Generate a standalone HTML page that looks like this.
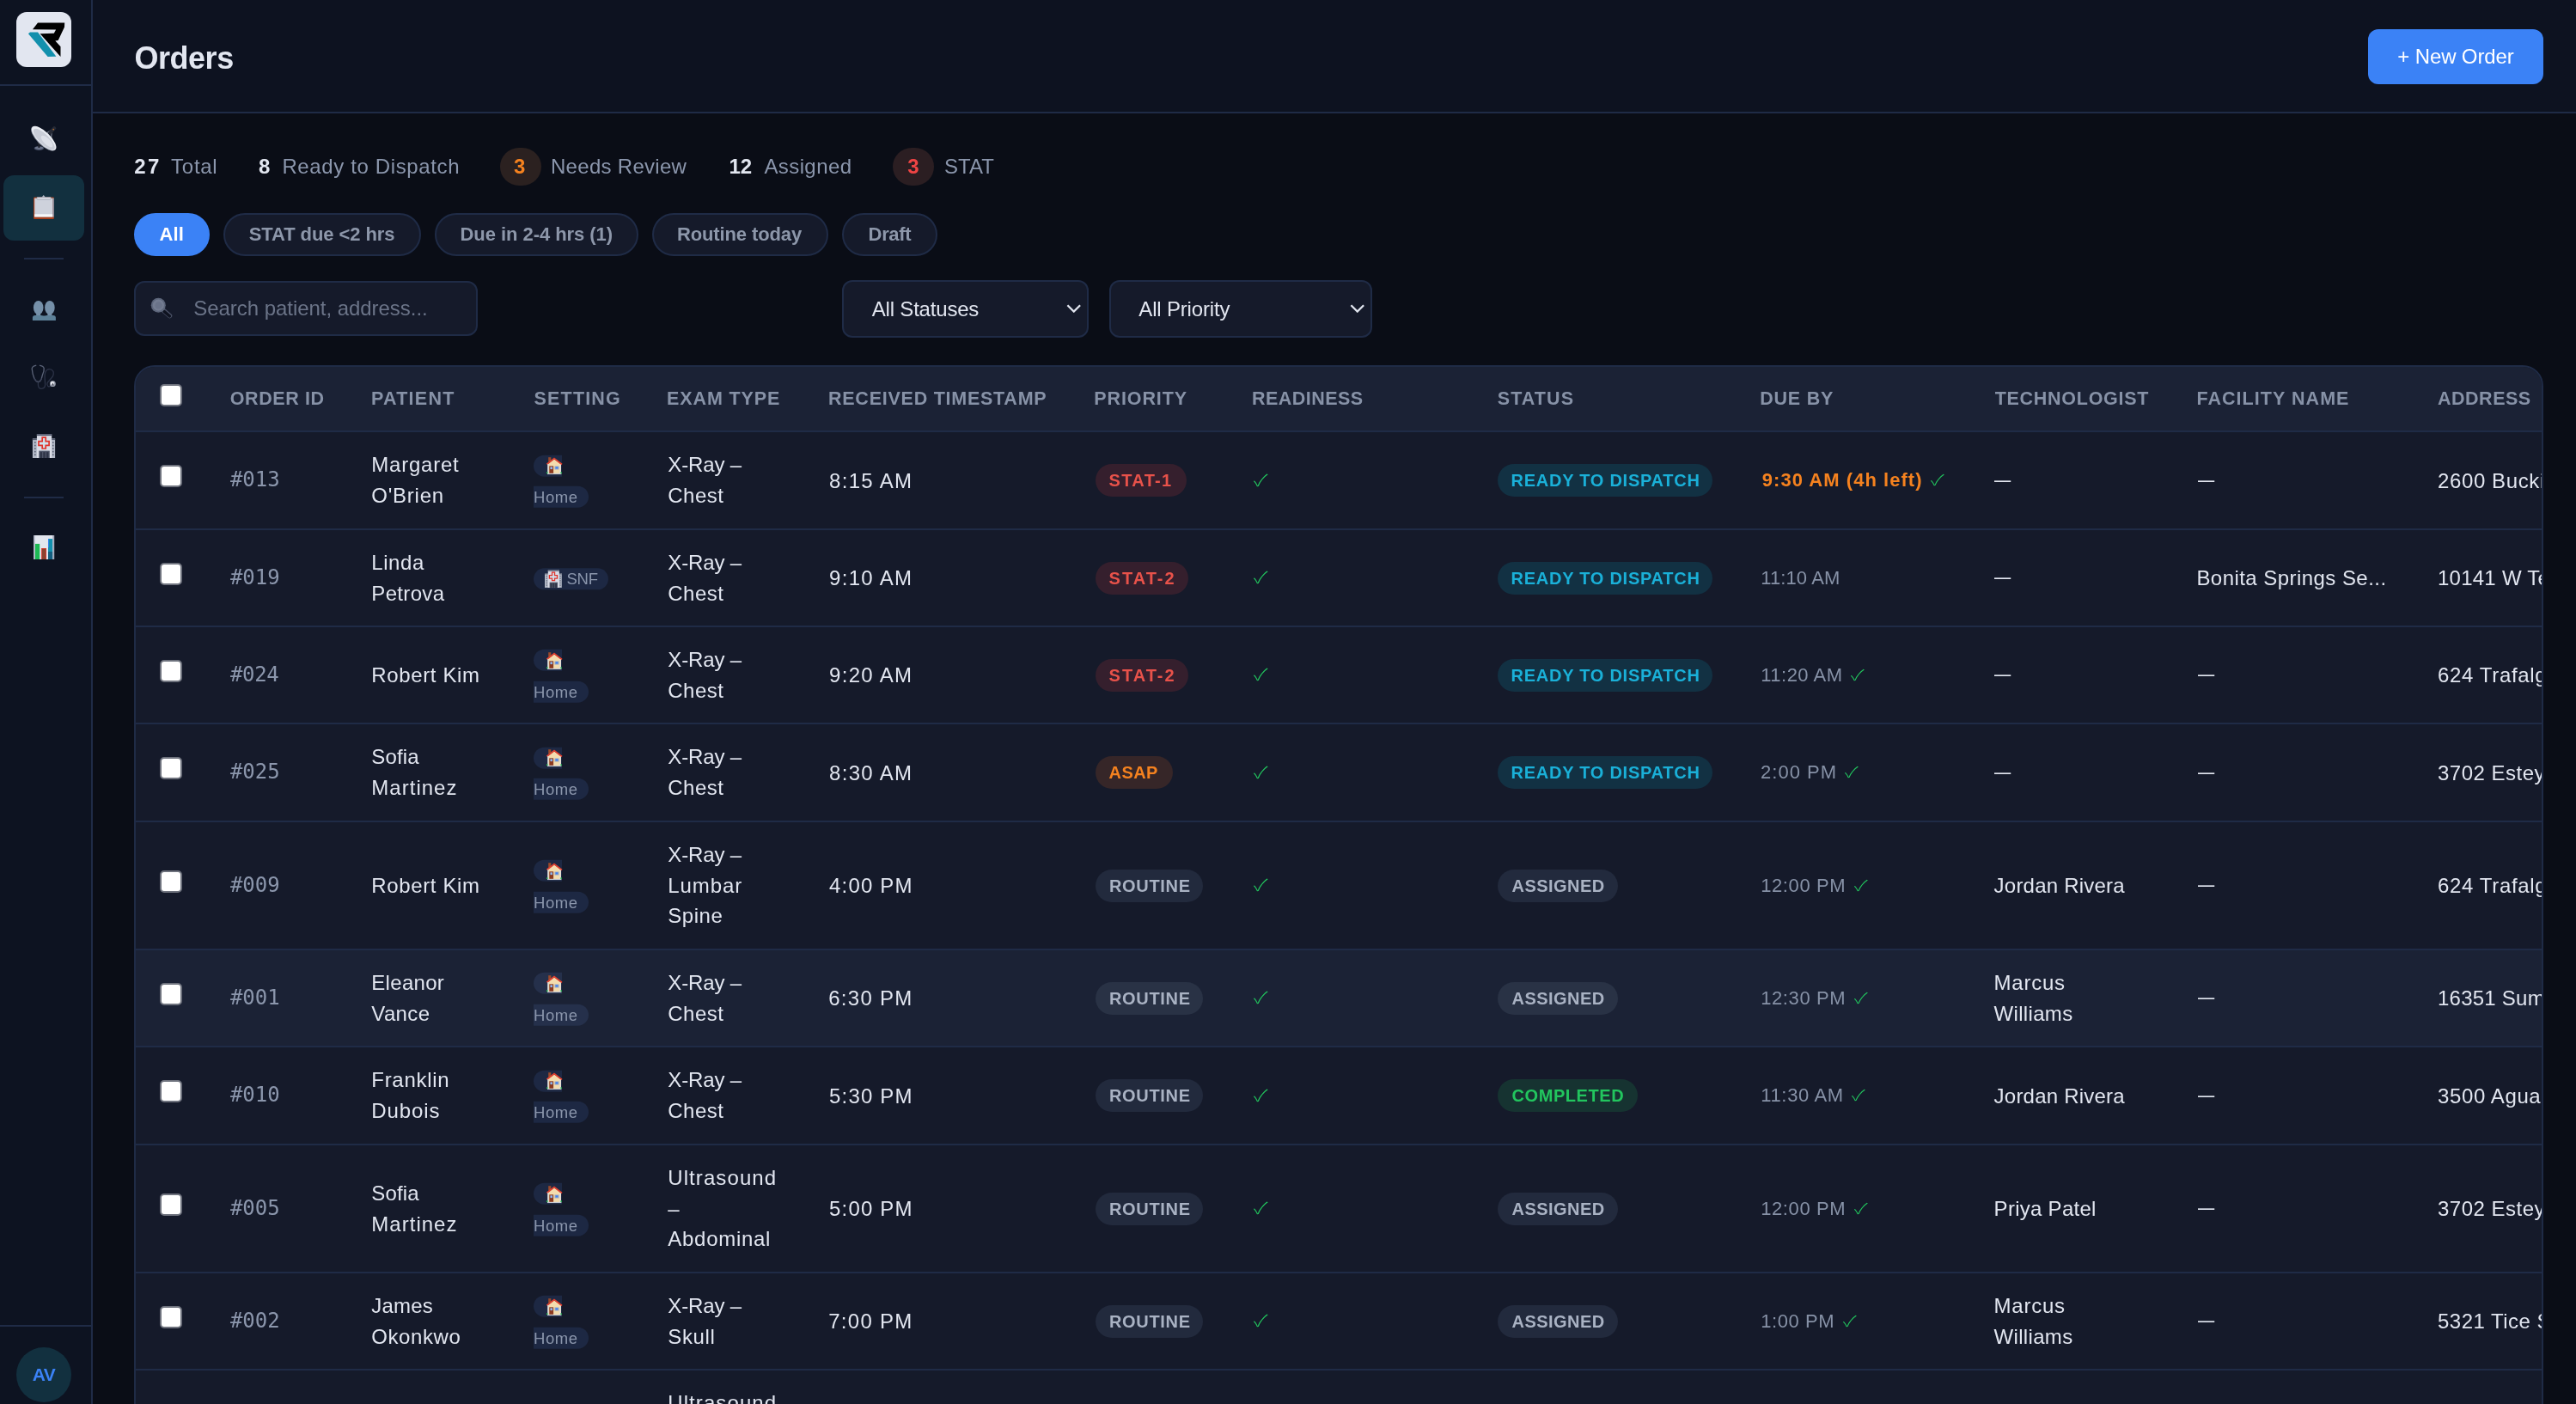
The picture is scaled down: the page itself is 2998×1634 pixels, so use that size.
<!DOCTYPE html>
<html lang="en"><head><meta charset="utf-8"><title>Orders</title>
<style>
*{box-sizing:border-box;margin:0;padding:0}
html,body{width:2998px;height:1634px;overflow:hidden;background:#0a0d16}
body{font-family:"Liberation Sans",sans-serif;color:#e2e6f0;position:relative;will-change:transform}
svg{display:block;flex:none}
.side{position:absolute;left:0;top:0;width:108px;height:1634px;background:#0d1321;border-right:2px solid #1f2b46}
.logo{position:absolute;left:19px;top:14px;width:64px;height:64px;border-radius:12px;background:#e2e6f0;overflow:hidden}
.side-hr{position:absolute;left:0;top:98px;width:106px;height:2px;background:#1f2b46}
.nav{position:absolute;left:4px;width:94px;height:76px;border-radius:12px;display:flex;align-items:center;justify-content:center}
.n1{top:123px}.n2{top:203px}.n3{top:323px}.n4{top:401px}.n5{top:481px}.n6{top:599px}
.n2.act{top:204px}
.act{background:#12303f}
.sep{position:absolute;left:28px;width:46px;height:2px;background:#1f2b46}
.s1{top:300px}.s2{top:578px}
.side-fr{position:absolute;left:0;top:1542px;width:106px;height:2px;background:#1f2b46}
.ava{position:absolute;left:19px;top:1568px;width:64px;height:64px;border-radius:50%;background:#12303f;color:#3b82f6;font-weight:700;font-size:21px;display:flex;align-items:center;justify-content:center}

.top{position:absolute;left:108px;top:0;width:2890px;height:132px;background:#0d1220;border-bottom:2px solid #1f2b46}
.ttl{position:absolute;left:47px;top:45.6px;font-size:36px;font-weight:700;letter-spacing:-.8px;line-height:44px;color:#e2e6f0;white-space:nowrap}
.newbtn{position:absolute;left:2648px;top:34px;width:204px;height:64px;border-radius:12px;background:#3b82f6;color:#fff;font-size:24px;display:flex;align-items:center;justify-content:center;white-space:nowrap}

.stats>span{position:absolute;top:178.8px;font-size:24px;line-height:30px;white-space:nowrap}
.sn{font-weight:700;color:#e2e6f0}
.sl{color:#8b96ac}
.stats .sc{top:172px;width:48px;height:44px;border-radius:22px;font-weight:700;line-height:44.6px;text-align:center;padding-top:0}
.sc.org{background:#2b2120;color:#f5821f}
.sc.red{background:#2b1e22;color:#ef4444}

.pill{position:absolute;top:248px;height:50px;border-radius:25px;border:2px solid #1f2b46;background:#151a2a;color:#8d97aa;font-weight:700;font-size:22px;display:flex;align-items:center;justify-content:center;white-space:nowrap;padding-bottom:1px}
.pill.on{background:#3b82f6;border-color:#3b82f6;color:#fff}

.search{position:absolute;left:156px;top:327px;width:400px;height:64px;border:2px solid #1f2b46;border-radius:12px;background:#151a2a}

.ph{position:absolute;left:68px;top:15px;font-size:24px;line-height:30px;color:#6b7488;white-space:nowrap}
.sel{position:absolute;top:326px;height:67px;border:2px solid #1f2b46;border-radius:12px;background:#151a2a}
.sel .st{position:absolute;left:32px;top:17px;font-size:24px;line-height:30px;color:#e2e6f0;white-space:nowrap}
.chev{position:absolute;right:6.3px;top:25.6px}

.tbl{position:absolute;left:156px;top:425px;width:2804px;height:1320px;border:2px solid #1f2b46;border-radius:24px;background:#151a2a;overflow:hidden}
.th{position:absolute;left:0;top:0;width:100%;height:76px;background:#1b2235;border-bottom:2px solid #1f2b46}
.th .c{padding-top:2px;font-size:21.5px;font-weight:700;color:#8792a7;letter-spacing:1px}
.tr{position:absolute;left:0;width:100%;border-bottom:2px solid #1f2b46}
.tr.hov{background:#1b2235}
.c{position:absolute;top:0;bottom:0;display:flex;align-items:center;white-space:nowrap;font-size:24px;line-height:35.7px;color:#e2e6f0}
.c-cb{left:28px}.c-id{left:109px}.c-pat{left:274.3px}.c-set{left:463px}.c-exam{left:619.3px}.c-recv{left:806px}
.c-prio{left:1117px}.c-rdy{left:1301px}.c-stat{left:1585px}.c-due{left:1891px}.c-tech{left:2162.6px}.c-fac{left:2398px}.c-addr{left:2678px}
.cb{display:block;width:26px;height:26px;border:2px solid #6e727d;border-radius:5px;background:#fff;transform:translateY(-5px)}
.th .cb{transform:translateY(-5px)}
.tr .c-id{font-family:"DejaVu Sans Mono","Liberation Mono",monospace;color:#8b96ac;font-size:24px}
.bdg{display:inline-flex;align-items:center;height:38px;padding:0 16px;border-radius:19px;font-size:20px;font-weight:700;letter-spacing:1px;line-height:22px}
.red{background:#351f2d;color:#e8524a}
.org{background:#362628;color:#f5821f}
.gry{background:#222a3d;color:#a9b2c3}
.cyn{background:#123143;color:#1ab0d8}
.grn{background:#163331;color:#22c55e}
.hov .gry{background:#293245}
.set{display:flex;flex-direction:column;align-items:flex-start;transform:translateY(1.7px)}
.sb{display:flex;align-items:center;height:25px;background:#1d2843;color:#8b96ac;font-size:18.5px;line-height:25px}
.hov .sb{background:#25304b}
.sb1{width:33px;border-radius:12.5px 0 0 12.5px;padding-left:13px;overflow:visible}
.sb2{border-radius:0 12.5px 12.5px 0;padding:0 12.3px 0 1px;margin-top:10.8px}
.sbf{border-radius:12.5px;padding:0 11px 0 13px;transform:translateY(1.3px)}
.snf{margin-left:6px}
.due{font-size:22px;color:#8792a7}
.due.hot{color:#f5821f;font-weight:700}

.c-addr{right:0;overflow:hidden}
.ft{position:relative;white-space:nowrap}
.dash{display:inline-block;transform:scaleX(.8);transform-origin:0 50%}
.tr .one{padding-top:1.6px}
.dash{top:-2.2px}
.ni{position:absolute;left:30px}
.si{position:absolute;left:8px;top:9px}
.hs{position:absolute;left:14.8px;top:2.6px}
.sb1{position:relative;top:-0.8px}
.hsp{margin-left:0.4px}
.ck{display:inline-block;font-family:"Noto Sans CJK JP","Noto Sans CJK SC","DejaVu Sans",sans-serif;font-weight:300;color:#22c55e;font-size:18.8px;line-height:24px;transform:scaleX(1.33);transform-origin:0 50%;position:relative;left:0px;top:-1.5px}
.dck{font-size:17.2px;transform:scaleX(1.38);margin-left:10.2px;left:0;top:-0.6px}
.hot+.dck{margin-left:12.5px}

</style></head>
<body>
<aside class="side">
 <div class="logo"><svg width="64" height="64" viewBox="0 0 64 64"><path d="M25 12.4 L56.2 12.4 L56 17.5 L48.7 32.9 L45.3 33.5 L51.5 40.3 L51.5 52.1 L27.6 25.2 L43.8 24.8 L46.1 20.5 L19 20.3 Z" fill="#000"/><path d="M13.9 25.2 L16 23.5 L25 23.5 L46.4 51.7 L36.6 52.1 Z" fill="#1290ad"/></svg></div>
 <div class="side-hr"></div>
 <div class="nav n2 act"></div>
 <svg class="ni" style="top:140px" width="42" height="42" viewBox="0 0 42 42"><ellipse cx="15.4" cy="32.6" rx="5.6" ry="2.5" fill="#49526a"/><ellipse cx="15.4" cy="32.1" rx="4.6" ry="1.7" fill="#6b7388"/><path d="M13.4 25 L14.6 32 L16.2 32 L17.4 27 Z" fill="#1d2029"/><path d="M24.5 14.8 L29 11.8 M30.2 14 L29.6 21" stroke="#7b8394" stroke-width="1.1" fill="none"/><path d="M28.6 14.2 L33.2 9.2" stroke="#262a36" stroke-width="4.2" stroke-linecap="round"/><circle cx="32.2" cy="10.6" r="0.9" fill="#b06a2c"/><g transform="rotate(44.5 21 21)"><ellipse cx="21" cy="21.5" rx="18.9" ry="7.6" fill="#9097a6"/><ellipse cx="21" cy="20.8" rx="18.7" ry="7.2" fill="#e9ecf2"/><ellipse cx="22" cy="21.6" rx="16.5" ry="5.7" fill="#c9cdd7"/><ellipse cx="26" cy="21" rx="9" ry="3.6" fill="#dde0e8"/></g></svg>
 <svg class="ni" style="top:220px" width="42" height="42" viewBox="0 0 42 42"><rect x="9" y="9.6" width="23.9" height="25.4" rx="1.2" fill="#a5401f"/><rect x="31.2" y="10.6" width="1.7" height="22" fill="#8d92a3"/><rect x="10.2" y="10.6" width="21" height="21.8" fill="#ced2dc"/><rect x="10.2" y="29.3" width="21" height="3.1" fill="#f6f7fa"/><path d="M18.4 9.8 L20.7 6.9 L23 9.8 Z" fill="#b4b9c6"/><rect x="12.9" y="9.6" width="16.4" height="2.5" rx="0.6" fill="#dfe2e9" stroke="#8c91a0" stroke-width="0.6"/></svg>
 <div class="sep s1"></div>
 <svg class="ni" style="top:340px" width="42" height="42" viewBox="0 0 42 42"><g fill="#7590a9"><ellipse cx="14.7" cy="18" rx="5.8" ry="8.1"/><ellipse cx="27.9" cy="18" rx="5.8" ry="8.1"/><rect x="12.2" y="24" width="5" height="4"/><rect x="25.4" y="24" width="5" height="4"/></g><path d="M7.9 33 V29.6 Q7.9 27.3 11 26.9 H17.5 Q21.3 27.4 21.3 27.4 Q21.3 27.4 25 26.9 H31.8 Q34.9 27.3 34.9 29.6 V33 Z" fill="#5d8199"/></svg>
 <svg class="ni" style="top:418px" width="42" height="42" viewBox="0 0 42 42"><g fill="none" stroke-linecap="round" stroke-width="1.35"><path d="M14.4 26.6 V30 Q14.6 34.2 18.2 34.4 Q22.6 34.2 22.6 29.6 L22.1 21 Q21.8 13.8 25.6 12 Q29.6 10.6 32 14.4 Q33.2 18.4 30 21.8 L25.3 27.2 Q24.2 29.4 25.6 31.2 Q27.4 32.8 29.6 30.6" stroke="#2c3347"/><path d="M11.7 7.3 Q7.6 8 7.2 11 Q7.6 16.8 9.9 22.5 Q11.4 25.6 14.4 26.6 Q17.4 25.6 18.2 23 L19.4 18.6 Q21.6 13.6 21.2 10.6 Q20.6 8 16.5 7.3" stroke="#596176"/><path d="M9.9 22.5 Q11.4 25.6 14.4 26.6 Q17.4 25.6 18.2 23" stroke="#3a4156"/></g><circle cx="31.4" cy="28.7" r="3.4" fill="#9aa0ae"/><circle cx="31" cy="28" r="2.2" fill="#e4e6ec"/><path d="M30.2 30.4 L31.4 27.6 L32.8 30.6 Z" fill="#3b3f4e"/></svg>
 <svg class="ni" style="top:498px" width="42" height="42" viewBox="0 0 42 42"><rect x="7.9" y="12.3" width="26.2" height="22.7" fill="#b3b9c7"/><rect x="7.9" y="12.3" width="5.3" height="1.8" fill="#565d70"/><rect x="28.8" y="12.3" width="5.3" height="1.8" fill="#565d70"/><g fill="#555c6e"><rect x="10.1" y="16.1" width="1.5" height="1.7"/><rect x="10.1" y="19.7" width="1.5" height="1.7"/><rect x="10.1" y="23.3" width="1.5" height="1.7"/><rect x="10.1" y="26.8" width="1.5" height="1.7"/><rect x="10.1" y="30.4" width="1.5" height="1.7"/><rect x="31" y="16.1" width="1.5" height="1.7"/><rect x="31" y="19.7" width="1.5" height="1.7"/><rect x="31" y="23.3" width="1.5" height="1.7"/><rect x="31" y="26.8" width="1.5" height="1.7"/><rect x="31" y="30.4" width="1.5" height="1.7"/></g><rect x="12.9" y="7.2" width="17.3" height="27.8" fill="#d9dce6"/><rect x="12.9" y="7.2" width="17.3" height="1.9" fill="#4f566a"/><path d="M19.2 11.1h4v4.5h3.9v4.8h-3.9v3.6h-4v-3.6H15v-4.8h4.2z" fill="#cfe3ee" stroke="#e0332b" stroke-width="1.7"/><rect x="15.3" y="26.6" width="12.5" height="8.4" fill="#4e5568"/><rect x="16.6" y="28.2" width="2.4" height="6.8" fill="#2f3547"/><rect x="20.3" y="28.2" width="2.4" height="6.8" fill="#2f3547"/><rect x="24" y="28.2" width="2.4" height="6.8" fill="#2f3547"/></svg>
 <div class="sep s2"></div>
 <svg class="ni" style="top:616px" width="42" height="42" viewBox="0 0 42 42"><rect x="9" y="7" width="24.1" height="28" fill="#e2e6ef"/><rect x="9" y="7" width="1.6" height="28" fill="#a9aec0"/><rect x="31.3" y="7" width="1.8" height="28" fill="#a4a9bb"/><rect x="10.9" y="16.9" width="5.3" height="18.1" fill="#1db954"/><rect x="18.1" y="22" width="5.9" height="13" fill="#d8392e"/><rect x="19" y="22.9" width="4.1" height="12.1" fill="#8a4330"/><rect x="26" y="11.1" width="5.1" height="23.9" fill="#1290ae"/><rect x="26" y="26" width="5.1" height="9" fill="#135e80"/><rect x="26" y="11.1" width="0.9" height="10" fill="#3b82f6"/></svg>
 <div class="side-fr"></div>
 <div class="ava"><span id="t136" class="ft" style="letter-spacing:-0.63px;margin-right:0.63px;left:0.2px">AV</span></div>
</aside>
<header class="top">
 <h1 class="ttl"><span id="t137" class="ft" style="letter-spacing:-0.45px;margin-right:0.45px;left:1.4px">Orders</span></h1>
 <div class="newbtn"><span id="t138" class="ft" style="letter-spacing:-0.14px;margin-right:0.14px;left:0.0px">+ New Order</span></div>
</header>
<main>
 <div class="stats">
  <span class="sn" style="left:155px"><span id="t139" class="ft" style="letter-spacing:2.25px;margin-right:-2.25px;left:1.3px">27</span></span><span class="sl" style="left:198px"><span id="t140" class="ft" style="letter-spacing:0.72px;margin-right:-0.72px;left:1.1px">Total</span></span>
  <span class="sn" style="left:300px"><span id="t141" class="ft" style="letter-spacing:0.00px;margin-right:0.00px;left:1.1px">8</span></span><span class="sl" style="left:328px"><span id="t142" class="ft" style="letter-spacing:0.63px;margin-right:-0.63px;left:0.4px">Ready to Dispatch</span></span>
  <span class="sc org" style="left:582px"><span id="t143" class="ft" style="letter-spacing:0.00px;margin-right:0.00px;left:-1.4px">3</span></span><span class="sl" style="left:641px"><span id="t144" class="ft" style="letter-spacing:0.29px;margin-right:-0.29px;left:0.0px">Needs Review</span></span>
  <span class="sn" style="left:848px"><span id="t145" class="ft" style="letter-spacing:-0.09px;margin-right:0.09px;left:0.5px">12</span></span><span class="sl" style="left:888px"><span id="t146" class="ft" style="letter-spacing:0.41px;margin-right:-0.41px;left:1.4px">Assigned</span></span>
  <span class="sc red" style="left:1039px"><span id="t147" class="ft" style="letter-spacing:0.00px;margin-right:0.00px;left:0.0px">3</span></span><span class="sl" style="left:1099px"><span id="t148" class="ft" style="letter-spacing:0.09px;margin-right:-0.09px;left:-0.1px">STAT</span></span>
 </div>
 <div class="pills">
  <span class="pill on" style="left:156px;width:88px"><span id="t149" class="ft" style="letter-spacing:0.18px;margin-right:-0.18px;left:-0.3px">All</span></span>
  <span class="pill" style="left:260px;width:230px"><span id="t150" class="ft" style="letter-spacing:-0.08px;margin-right:0.08px;left:-0.4px">STAT due &lt;2 hrs</span></span>
  <span class="pill" style="left:506px;width:237px"><span id="t151" class="ft" style="letter-spacing:-0.05px;margin-right:0.05px;left:-0.2px">Due in 2-4 hrs (1)</span></span>
  <span class="pill" style="left:759px;width:205px"><span id="t152" class="ft" style="letter-spacing:-0.12px;margin-right:0.12px;left:-1.0px">Routine today</span></span>
  <span class="pill" style="left:980px;width:111px"><span id="t153" class="ft" style="letter-spacing:-0.32px;margin-right:0.32px;left:0.1px">Draft</span></span>
 </div>
 <div class="search"><svg class="si" width="42" height="42" viewBox="0 0 42 42"><path d="M24.6 23.6 L31.6 29.6" stroke="#4a5166" stroke-width="5.4" stroke-linecap="round"/><path d="M25.2 24.6 L31.4 29.9" stroke="#0f1320" stroke-width="3.4" stroke-linecap="round"/><circle cx="18.3" cy="17.2" r="8.5" fill="#5d667b"/><circle cx="18.3" cy="17.2" r="6.6" fill="#737c91"/><circle cx="18.6" cy="17.4" r="4.2" fill="#6a7389"/></svg><span class="ph"><span id="t154" class="ft" style="letter-spacing:-0.04px;margin-right:0.04px;left:-0.8px">Search patient, address...</span></span></div>
 <div class="sel" style="left:980px;width:287px"><span class="st"><span id="t155" class="ft" style="letter-spacing:-0.20px;margin-right:0.20px;left:0.8px">All Statuses</span></span><svg class="chev" width="17.5" height="10.5" viewBox="0 0 20 12"><path d="M1.6 1.4 L10 9.8 L18.4 1.4" fill="none" stroke="#e2e6f0" stroke-width="2.6"/></svg></div>
 <div class="sel" style="left:1291px;width:306px"><span class="st"><span id="t156" class="ft" style="letter-spacing:-0.17px;margin-right:0.17px;left:0.3px">All Priority</span></span><svg class="chev" width="17.5" height="10.5" viewBox="0 0 20 12"><path d="M1.6 1.4 L10 9.8 L18.4 1.4" fill="none" stroke="#e2e6f0" stroke-width="2.6"/></svg></div>

 <div class="tbl">
  <div class="th">
   <div class="c c-cb"><span class="cb"></span></div>
   <div class="c c-id"><span id="t124" class="ft" style="letter-spacing:0.62px;margin-right:-0.62px;left:0.7px">ORDER ID</span></div>
   <div class="c c-pat"><span id="t125" class="ft" style="letter-spacing:1.23px;margin-right:-1.23px;left:-0.2px">PATIENT</span></div>
   <div class="c c-set"><span id="t126" class="ft" style="letter-spacing:1.17px;margin-right:-1.17px;left:0.6px">SETTING</span></div>
   <div class="c c-exam"><span id="t127" class="ft" style="letter-spacing:0.90px;margin-right:-0.90px;left:-1.3px">EXAM TYPE</span></div>
   <div class="c c-recv"><span id="t128" class="ft" style="letter-spacing:0.75px;margin-right:-0.75px;left:0.0px">RECEIVED TIMESTAMP</span></div>
   <div class="c c-prio"><span id="t129" class="ft" style="letter-spacing:0.89px;margin-right:-0.89px;left:-1.7px">PRIORITY</span></div>
   <div class="c c-rdy"><span id="t130" class="ft" style="letter-spacing:0.48px;margin-right:-0.48px;left:-2.1px">READINESS</span></div>
   <div class="c c-stat"><span id="t131" class="ft" style="letter-spacing:1.08px;margin-right:-1.08px;left:-0.2px">STATUS</span></div>
   <div class="c c-due"><span id="t132" class="ft" style="letter-spacing:0.77px;margin-right:-0.77px;left:-0.8px">DUE BY</span></div>
   <div class="c c-tech"><span id="t133" class="ft" style="letter-spacing:0.72px;margin-right:-0.72px;left:1.1px">TECHNOLOGIST</span></div>
   <div class="c c-fac"><span id="t134" class="ft" style="letter-spacing:1.05px;margin-right:-1.05px;left:0.4px">FACILITY NAME</span></div>
   <div class="c c-addr"><span id="t135" class="ft" style="letter-spacing:0.51px;margin-right:-0.51px;left:1.0px">ADDRESS</span></div>
  </div>
<div class="tr" style="top:76px;height:114px">
<div class="c c-cb"><span class="cb"></span></div>
<div class="c c-id"><span id="t4" class="ft" style="letter-spacing:0.00px;margin-right:-0.00px;left:0.9px">#013</span></div>
<div class="c c-pat"><div><span id="t5" class="ft" style="letter-spacing:0.78px;margin-right:-0.78px;left:0.0px">Margaret</span><br><span id="t6" class="ft" style="letter-spacing:0.75px;margin-right:-0.75px;left:0.0px">O'Brien</span></div></div>
<div class="c c-set"><span class="set"><span class="sb sb1"><svg class="hs" width="19" height="21" viewBox="0 0 19 21"><rect x="2.2" y="0.5" width="3.1" height="5.5" fill="#9a4a2b"/><path d="M1.6 8.4 L9 2.6 L17 8.6 V19.6 H1.6 Z" fill="#f3dcae"/><path d="M0.5 8.6 L9 1.9 L18 8.8" fill="none" stroke="#e0402f" stroke-width="1.7" stroke-linejoin="miter"/><rect x="1.3" y="8.2" width="1.2" height="11.4" fill="#d9dde6"/><rect x="15.4" y="8.6" width="1.2" height="11" fill="#d9dde6"/><rect x="3.3" y="10.6" width="4.8" height="8.6" fill="#8c3a1f"/><rect x="4.4" y="11.6" width="2.6" height="2.8" fill="#8fb6ee"/><rect x="9.5" y="10.8" width="5" height="4" fill="#9aa7c4"/><rect x="10.6" y="11.6" width="2.8" height="2.2" fill="#3b82f6"/><rect x="1" y="19.2" width="16.4" height="1.2" fill="#c5c9d3"/><rect x="0" y="17.6" width="1.5" height="1.8" fill="#22b14c"/><rect x="16.4" y="17.6" width="1.5" height="1.8" fill="#22b14c"/></svg></span><span class="sb sb2"><span id="t1" class="ft" style="letter-spacing:0.54px;margin-right:-0.54px;left:-0.9px">Home</span></span></span></div>
<div class="c c-exam"><div><span id="t7" class="ft" style="letter-spacing:-0.15px;margin-right:0.15px;left:0.0px">X-Ray –</span><br><span id="t8" class="ft" style="letter-spacing:0.48px;margin-right:-0.48px;left:0.0px">Chest</span></div></div>
<div class="c c-recv one"><span id="t9" class="ft" style="letter-spacing:1.30px;margin-right:-1.30px;left:1.1px">8:15 AM</span></div>
<div class="c c-prio"><span class="bdg red" style="width:106.2px"><span id="t10" class="ft" style="letter-spacing:1.33px;margin-right:-1.33px;left:-0.4px">STAT-1</span></span></div>
<div class="c c-rdy"><span class="ck">✓</span></div>
<div class="c c-stat"><span class="bdg cyn" style="width:250.4px"><span id="t11" class="ft" style="letter-spacing:0.75px;margin-right:-0.75px;left:-0.5px">READY TO DISPATCH</span></span></div>
<div class="c c-due"><span id="t2" class="ft due hot" style="letter-spacing:1.04px;margin-right:-1.04px;left:1.8px">9:30 AM (4h left)</span><span class="ck dck">✓</span></div>
<div class="c c-tech one"><div><span id="t12" class="ft dash" style="letter-spacing:0.00px;margin-right:0.00px;left:0.8px">—</span></div></div>
<div class="c c-fac one"><span id="t3" class="ft dash" style="letter-spacing:0.00px;margin-right:0.00px;left:2.2px">—</span></div>
<div class="c c-addr one"><span class="ft" style="letter-spacing:0.613px;left:1px">2600 Buckingham Rd, Fort Myers</span></div>
</div>
<div class="tr" style="top:190px;height:113px">
<div class="c c-cb"><span class="cb"></span></div>
<div class="c c-id"><span id="t16" class="ft" style="letter-spacing:0.00px;margin-right:-0.00px;left:0.9px">#019</span></div>
<div class="c c-pat"><div><span id="t17" class="ft" style="letter-spacing:0.56px;margin-right:-0.56px;left:0.0px">Linda</span><br><span id="t18" class="ft" style="letter-spacing:0.33px;margin-right:-0.33px;left:0.0px">Petrova</span></div></div>
<div class="c c-set"><span class="sb sbf"><svg class="hsp" width="19.8" height="20.6" viewBox="7.9 7.2 26.2 27.8" preserveAspectRatio="none"><rect x="7.9" y="12.3" width="26.2" height="22.7" fill="#b3b9c7"/><rect x="7.9" y="12.3" width="5.3" height="1.8" fill="#565d70"/><rect x="28.8" y="12.3" width="5.3" height="1.8" fill="#565d70"/><g fill="#555c6e"><rect x="10.1" y="16.1" width="1.5" height="1.7"/><rect x="10.1" y="19.7" width="1.5" height="1.7"/><rect x="10.1" y="23.3" width="1.5" height="1.7"/><rect x="10.1" y="26.8" width="1.5" height="1.7"/><rect x="10.1" y="30.4" width="1.5" height="1.7"/><rect x="31" y="16.1" width="1.5" height="1.7"/><rect x="31" y="19.7" width="1.5" height="1.7"/><rect x="31" y="23.3" width="1.5" height="1.7"/><rect x="31" y="26.8" width="1.5" height="1.7"/><rect x="31" y="30.4" width="1.5" height="1.7"/></g><rect x="12.9" y="7.2" width="17.3" height="27.8" fill="#d9dce6"/><rect x="12.9" y="7.2" width="17.3" height="1.9" fill="#4f566a"/><path d="M19.2 11.1h4v4.5h3.9v4.8h-3.9v3.6h-4v-3.6H15v-4.8h4.2z" fill="#cfe3ee" stroke="#e0332b" stroke-width="1.7"/><rect x="15.3" y="26.6" width="12.5" height="8.4" fill="#4e5568"/><rect x="16.6" y="28.2" width="2.4" height="6.8" fill="#2f3547"/><rect x="20.3" y="28.2" width="2.4" height="6.8" fill="#2f3547"/><rect x="24" y="28.2" width="2.4" height="6.8" fill="#2f3547"/></svg><span class="snf"><span id="t13" class="ft" style="letter-spacing:-0.23px;margin-right:0.23px;left:-0.8px">SNF</span></span></span></div>
<div class="c c-exam"><div><span id="t19" class="ft" style="letter-spacing:-0.15px;margin-right:0.15px;left:0.0px">X-Ray –</span><br><span id="t20" class="ft" style="letter-spacing:0.48px;margin-right:-0.48px;left:0.0px">Chest</span></div></div>
<div class="c c-recv one"><span id="t21" class="ft" style="letter-spacing:1.30px;margin-right:-1.30px;left:1.1px">9:10 AM</span></div>
<div class="c c-prio"><span class="bdg red" style="width:108.3px"><span id="t22" class="ft" style="letter-spacing:2.03px;margin-right:-2.03px;left:-0.4px">STAT-2</span></span></div>
<div class="c c-rdy"><span class="ck">✓</span></div>
<div class="c c-stat"><span class="bdg cyn" style="width:250.4px"><span id="t23" class="ft" style="letter-spacing:0.75px;margin-right:-0.75px;left:-0.5px">READY TO DISPATCH</span></span></div>
<div class="c c-due"><span id="t14" class="ft due" style="letter-spacing:0.12px;margin-right:-0.12px;left:0.2px">11:10 AM</span></div>
<div class="c c-tech one"><div><span id="t24" class="ft dash" style="letter-spacing:0.00px;margin-right:0.00px;left:0.8px">—</span></div></div>
<div class="c c-fac one"><span id="t15" class="ft" style="letter-spacing:0.45px;margin-right:-0.45px;left:0.4px">Bonita Springs Se...</span></div>
<div class="c c-addr one"><span class="ft" style="letter-spacing:0.246px;left:1px">10141 W Terry St, Bonita Springs</span></div>
</div>
<div class="tr" style="top:303px;height:113px">
<div class="c c-cb"><span class="cb"></span></div>
<div class="c c-id"><span id="t28" class="ft" style="letter-spacing:-0.30px;margin-right:0.30px;left:0.9px">#024</span></div>
<div class="c c-pat one"><div><span id="t29" class="ft" style="letter-spacing:0.63px;margin-right:-0.63px;left:0.0px">Robert Kim</span></div></div>
<div class="c c-set"><span class="set"><span class="sb sb1"><svg class="hs" width="19" height="21" viewBox="0 0 19 21"><rect x="2.2" y="0.5" width="3.1" height="5.5" fill="#9a4a2b"/><path d="M1.6 8.4 L9 2.6 L17 8.6 V19.6 H1.6 Z" fill="#f3dcae"/><path d="M0.5 8.6 L9 1.9 L18 8.8" fill="none" stroke="#e0402f" stroke-width="1.7" stroke-linejoin="miter"/><rect x="1.3" y="8.2" width="1.2" height="11.4" fill="#d9dde6"/><rect x="15.4" y="8.6" width="1.2" height="11" fill="#d9dde6"/><rect x="3.3" y="10.6" width="4.8" height="8.6" fill="#8c3a1f"/><rect x="4.4" y="11.6" width="2.6" height="2.8" fill="#8fb6ee"/><rect x="9.5" y="10.8" width="5" height="4" fill="#9aa7c4"/><rect x="10.6" y="11.6" width="2.8" height="2.2" fill="#3b82f6"/><rect x="1" y="19.2" width="16.4" height="1.2" fill="#c5c9d3"/><rect x="0" y="17.6" width="1.5" height="1.8" fill="#22b14c"/><rect x="16.4" y="17.6" width="1.5" height="1.8" fill="#22b14c"/></svg></span><span class="sb sb2"><span id="t25" class="ft" style="letter-spacing:0.54px;margin-right:-0.54px;left:-0.9px">Home</span></span></span></div>
<div class="c c-exam"><div><span id="t30" class="ft" style="letter-spacing:-0.15px;margin-right:0.15px;left:0.0px">X-Ray –</span><br><span id="t31" class="ft" style="letter-spacing:0.48px;margin-right:-0.48px;left:0.0px">Chest</span></div></div>
<div class="c c-recv one"><span id="t32" class="ft" style="letter-spacing:1.30px;margin-right:-1.30px;left:1.1px">9:20 AM</span></div>
<div class="c c-prio"><span class="bdg red" style="width:108.3px"><span id="t33" class="ft" style="letter-spacing:2.03px;margin-right:-2.03px;left:-0.4px">STAT-2</span></span></div>
<div class="c c-rdy"><span class="ck">✓</span></div>
<div class="c c-stat"><span class="bdg cyn" style="width:250.4px"><span id="t34" class="ft" style="letter-spacing:0.75px;margin-right:-0.75px;left:-0.5px">READY TO DISPATCH</span></span></div>
<div class="c c-due"><span id="t26" class="ft due" style="letter-spacing:0.50px;margin-right:-0.50px;left:0.2px">11:20 AM</span><span class="ck dck">✓</span></div>
<div class="c c-tech one"><div><span id="t35" class="ft dash" style="letter-spacing:0.00px;margin-right:0.00px;left:0.8px">—</span></div></div>
<div class="c c-fac one"><span id="t27" class="ft dash" style="letter-spacing:0.00px;margin-right:0.00px;left:2.2px">—</span></div>
<div class="c c-addr one"><span class="ft" style="letter-spacing:0.644px;left:1px">624 Trafalgar Pkwy, Cape Coral</span></div>
</div>
<div class="tr" style="top:416px;height:114px">
<div class="c c-cb"><span class="cb"></span></div>
<div class="c c-id"><span id="t39" class="ft" style="letter-spacing:0.00px;margin-right:-0.00px;left:0.9px">#025</span></div>
<div class="c c-pat"><div><span id="t40" class="ft" style="letter-spacing:0.14px;margin-right:-0.14px;left:0.0px">Sofia</span><br><span id="t41" class="ft" style="letter-spacing:1.02px;margin-right:-1.02px;left:0.0px">Martinez</span></div></div>
<div class="c c-set"><span class="set"><span class="sb sb1"><svg class="hs" width="19" height="21" viewBox="0 0 19 21"><rect x="2.2" y="0.5" width="3.1" height="5.5" fill="#9a4a2b"/><path d="M1.6 8.4 L9 2.6 L17 8.6 V19.6 H1.6 Z" fill="#f3dcae"/><path d="M0.5 8.6 L9 1.9 L18 8.8" fill="none" stroke="#e0402f" stroke-width="1.7" stroke-linejoin="miter"/><rect x="1.3" y="8.2" width="1.2" height="11.4" fill="#d9dde6"/><rect x="15.4" y="8.6" width="1.2" height="11" fill="#d9dde6"/><rect x="3.3" y="10.6" width="4.8" height="8.6" fill="#8c3a1f"/><rect x="4.4" y="11.6" width="2.6" height="2.8" fill="#8fb6ee"/><rect x="9.5" y="10.8" width="5" height="4" fill="#9aa7c4"/><rect x="10.6" y="11.6" width="2.8" height="2.2" fill="#3b82f6"/><rect x="1" y="19.2" width="16.4" height="1.2" fill="#c5c9d3"/><rect x="0" y="17.6" width="1.5" height="1.8" fill="#22b14c"/><rect x="16.4" y="17.6" width="1.5" height="1.8" fill="#22b14c"/></svg></span><span class="sb sb2"><span id="t36" class="ft" style="letter-spacing:0.54px;margin-right:-0.54px;left:-0.9px">Home</span></span></span></div>
<div class="c c-exam"><div><span id="t42" class="ft" style="letter-spacing:-0.15px;margin-right:0.15px;left:0.0px">X-Ray –</span><br><span id="t43" class="ft" style="letter-spacing:0.48px;margin-right:-0.48px;left:0.0px">Chest</span></div></div>
<div class="c c-recv one"><span id="t44" class="ft" style="letter-spacing:1.30px;margin-right:-1.30px;left:1.1px">8:30 AM</span></div>
<div class="c c-prio"><span class="bdg org" style="width:89.7px"><span id="t45" class="ft" style="letter-spacing:0.39px;margin-right:-0.39px;left:-0.4px">ASAP</span></span></div>
<div class="c c-rdy"><span class="ck">✓</span></div>
<div class="c c-stat"><span class="bdg cyn" style="width:250.4px"><span id="t46" class="ft" style="letter-spacing:0.75px;margin-right:-0.75px;left:-0.5px">READY TO DISPATCH</span></span></div>
<div class="c c-due"><span id="t37" class="ft due" style="letter-spacing:0.99px;margin-right:-0.99px;left:0.1px">2:00 PM</span><span class="ck dck">✓</span></div>
<div class="c c-tech one"><div><span id="t47" class="ft dash" style="letter-spacing:0.00px;margin-right:0.00px;left:0.8px">—</span></div></div>
<div class="c c-fac one"><span id="t38" class="ft dash" style="letter-spacing:0.00px;margin-right:0.00px;left:2.2px">—</span></div>
<div class="c c-addr one"><span class="ft" style="letter-spacing:0.487px;left:1px">3702 Estey Ave, Naples</span></div>
</div>
<div class="tr" style="top:530px;height:149px">
<div class="c c-cb"><span class="cb"></span></div>
<div class="c c-id"><span id="t51" class="ft" style="letter-spacing:0.00px;margin-right:-0.00px;left:0.9px">#009</span></div>
<div class="c c-pat one"><div><span id="t52" class="ft" style="letter-spacing:0.63px;margin-right:-0.63px;left:0.0px">Robert Kim</span></div></div>
<div class="c c-set"><span class="set"><span class="sb sb1"><svg class="hs" width="19" height="21" viewBox="0 0 19 21"><rect x="2.2" y="0.5" width="3.1" height="5.5" fill="#9a4a2b"/><path d="M1.6 8.4 L9 2.6 L17 8.6 V19.6 H1.6 Z" fill="#f3dcae"/><path d="M0.5 8.6 L9 1.9 L18 8.8" fill="none" stroke="#e0402f" stroke-width="1.7" stroke-linejoin="miter"/><rect x="1.3" y="8.2" width="1.2" height="11.4" fill="#d9dde6"/><rect x="15.4" y="8.6" width="1.2" height="11" fill="#d9dde6"/><rect x="3.3" y="10.6" width="4.8" height="8.6" fill="#8c3a1f"/><rect x="4.4" y="11.6" width="2.6" height="2.8" fill="#8fb6ee"/><rect x="9.5" y="10.8" width="5" height="4" fill="#9aa7c4"/><rect x="10.6" y="11.6" width="2.8" height="2.2" fill="#3b82f6"/><rect x="1" y="19.2" width="16.4" height="1.2" fill="#c5c9d3"/><rect x="0" y="17.6" width="1.5" height="1.8" fill="#22b14c"/><rect x="16.4" y="17.6" width="1.5" height="1.8" fill="#22b14c"/></svg></span><span class="sb sb2"><span id="t48" class="ft" style="letter-spacing:0.54px;margin-right:-0.54px;left:-0.9px">Home</span></span></span></div>
<div class="c c-exam"><div><span id="t53" class="ft" style="letter-spacing:-0.15px;margin-right:0.15px;left:0.0px">X-Ray –</span><br><span id="t54" class="ft" style="letter-spacing:0.90px;margin-right:-0.90px;left:0.0px">Lumbar</span><br><span id="t55" class="ft" style="letter-spacing:0.54px;margin-right:-0.54px;left:0.0px">Spine</span></div></div>
<div class="c c-recv one"><span id="t56" class="ft" style="letter-spacing:1.16px;margin-right:-1.16px;left:1.1px">4:00 PM</span></div>
<div class="c c-prio"><span class="bdg gry" style="width:125px"><span id="t57" class="ft" style="letter-spacing:0.70px;margin-right:-0.70px;left:-0.1px">ROUTINE</span></span></div>
<div class="c c-rdy"><span class="ck">✓</span></div>
<div class="c c-stat"><span class="bdg gry" style="width:140.4px"><span id="t58" class="ft" style="letter-spacing:0.44px;margin-right:-0.44px;left:0.6px">ASSIGNED</span></span></div>
<div class="c c-due"><span id="t49" class="ft due" style="letter-spacing:0.60px;margin-right:-0.60px;left:0.2px">12:00 PM</span><span class="ck dck">✓</span></div>
<div class="c c-tech one"><div><span id="t59" class="ft" style="letter-spacing:0.22px;margin-right:-0.22px;left:0.0px">Jordan Rivera</span></div></div>
<div class="c c-fac one"><span id="t50" class="ft dash" style="letter-spacing:0.00px;margin-right:0.00px;left:2.2px">—</span></div>
<div class="c c-addr one"><span class="ft" style="letter-spacing:0.644px;left:1px">624 Trafalgar Pkwy, Cape Coral</span></div>
</div>
<div class="tr hov" style="top:679px;height:113px">
<div class="c c-cb"><span class="cb"></span></div>
<div class="c c-id"><span id="t63" class="ft" style="letter-spacing:0.00px;margin-right:-0.00px;left:0.9px">#001</span></div>
<div class="c c-pat"><div><span id="t64" class="ft" style="letter-spacing:0.30px;margin-right:-0.30px;left:0.0px">Eleanor</span><br><span id="t65" class="ft" style="letter-spacing:0.36px;margin-right:-0.36px;left:0.0px">Vance</span></div></div>
<div class="c c-set"><span class="set"><span class="sb sb1"><svg class="hs" width="19" height="21" viewBox="0 0 19 21"><rect x="2.2" y="0.5" width="3.1" height="5.5" fill="#9a4a2b"/><path d="M1.6 8.4 L9 2.6 L17 8.6 V19.6 H1.6 Z" fill="#f3dcae"/><path d="M0.5 8.6 L9 1.9 L18 8.8" fill="none" stroke="#e0402f" stroke-width="1.7" stroke-linejoin="miter"/><rect x="1.3" y="8.2" width="1.2" height="11.4" fill="#d9dde6"/><rect x="15.4" y="8.6" width="1.2" height="11" fill="#d9dde6"/><rect x="3.3" y="10.6" width="4.8" height="8.6" fill="#8c3a1f"/><rect x="4.4" y="11.6" width="2.6" height="2.8" fill="#8fb6ee"/><rect x="9.5" y="10.8" width="5" height="4" fill="#9aa7c4"/><rect x="10.6" y="11.6" width="2.8" height="2.2" fill="#3b82f6"/><rect x="1" y="19.2" width="16.4" height="1.2" fill="#c5c9d3"/><rect x="0" y="17.6" width="1.5" height="1.8" fill="#22b14c"/><rect x="16.4" y="17.6" width="1.5" height="1.8" fill="#22b14c"/></svg></span><span class="sb sb2"><span id="t60" class="ft" style="letter-spacing:0.54px;margin-right:-0.54px;left:-0.9px">Home</span></span></span></div>
<div class="c c-exam"><div><span id="t66" class="ft" style="letter-spacing:-0.15px;margin-right:0.15px;left:0.0px">X-Ray –</span><br><span id="t67" class="ft" style="letter-spacing:0.48px;margin-right:-0.48px;left:0.0px">Chest</span></div></div>
<div class="c c-recv one"><span id="t68" class="ft" style="letter-spacing:1.30px;margin-right:-1.30px;left:0.2px">6:30 PM</span></div>
<div class="c c-prio"><span class="bdg gry" style="width:125px"><span id="t69" class="ft" style="letter-spacing:0.70px;margin-right:-0.70px;left:-0.1px">ROUTINE</span></span></div>
<div class="c c-rdy"><span class="ck">✓</span></div>
<div class="c c-stat"><span class="bdg gry" style="width:140.4px"><span id="t70" class="ft" style="letter-spacing:0.44px;margin-right:-0.44px;left:0.6px">ASSIGNED</span></span></div>
<div class="c c-due"><span id="t61" class="ft due" style="letter-spacing:0.60px;margin-right:-0.60px;left:0.2px">12:30 PM</span><span class="ck dck">✓</span></div>
<div class="c c-tech"><div><span id="t71" class="ft" style="letter-spacing:0.77px;margin-right:-0.77px;left:0.0px">Marcus</span><br><span id="t72" class="ft" style="letter-spacing:0.32px;margin-right:-0.32px;left:0.0px">Williams</span></div></div>
<div class="c c-fac one"><span id="t62" class="ft dash" style="letter-spacing:0.00px;margin-right:0.00px;left:2.2px">—</span></div>
<div class="c c-addr one"><span class="ft" style="letter-spacing:0.241px;left:1px">16351 Summerlin Rd, Fort Myers</span></div>
</div>
<div class="tr" style="top:792px;height:114px">
<div class="c c-cb"><span class="cb"></span></div>
<div class="c c-id"><span id="t76" class="ft" style="letter-spacing:0.00px;margin-right:-0.00px;left:0.9px">#010</span></div>
<div class="c c-pat"><div><span id="t77" class="ft" style="letter-spacing:0.71px;margin-right:-0.71px;left:0.0px">Franklin</span><br><span id="t78" class="ft" style="letter-spacing:0.90px;margin-right:-0.90px;left:0.0px">Dubois</span></div></div>
<div class="c c-set"><span class="set"><span class="sb sb1"><svg class="hs" width="19" height="21" viewBox="0 0 19 21"><rect x="2.2" y="0.5" width="3.1" height="5.5" fill="#9a4a2b"/><path d="M1.6 8.4 L9 2.6 L17 8.6 V19.6 H1.6 Z" fill="#f3dcae"/><path d="M0.5 8.6 L9 1.9 L18 8.8" fill="none" stroke="#e0402f" stroke-width="1.7" stroke-linejoin="miter"/><rect x="1.3" y="8.2" width="1.2" height="11.4" fill="#d9dde6"/><rect x="15.4" y="8.6" width="1.2" height="11" fill="#d9dde6"/><rect x="3.3" y="10.6" width="4.8" height="8.6" fill="#8c3a1f"/><rect x="4.4" y="11.6" width="2.6" height="2.8" fill="#8fb6ee"/><rect x="9.5" y="10.8" width="5" height="4" fill="#9aa7c4"/><rect x="10.6" y="11.6" width="2.8" height="2.2" fill="#3b82f6"/><rect x="1" y="19.2" width="16.4" height="1.2" fill="#c5c9d3"/><rect x="0" y="17.6" width="1.5" height="1.8" fill="#22b14c"/><rect x="16.4" y="17.6" width="1.5" height="1.8" fill="#22b14c"/></svg></span><span class="sb sb2"><span id="t73" class="ft" style="letter-spacing:0.54px;margin-right:-0.54px;left:-0.9px">Home</span></span></span></div>
<div class="c c-exam"><div><span id="t79" class="ft" style="letter-spacing:-0.15px;margin-right:0.15px;left:0.0px">X-Ray –</span><br><span id="t80" class="ft" style="letter-spacing:0.48px;margin-right:-0.48px;left:0.0px">Chest</span></div></div>
<div class="c c-recv one"><span id="t81" class="ft" style="letter-spacing:1.16px;margin-right:-1.16px;left:1.1px">5:30 PM</span></div>
<div class="c c-prio"><span class="bdg gry" style="width:125px"><span id="t82" class="ft" style="letter-spacing:0.70px;margin-right:-0.70px;left:-0.1px">ROUTINE</span></span></div>
<div class="c c-rdy"><span class="ck">✓</span></div>
<div class="c c-stat"><span class="bdg grn" style="width:162.6px"><span id="t83" class="ft" style="letter-spacing:0.56px;margin-right:-0.56px;left:0.6px">COMPLETED</span></span></div>
<div class="c c-due"><span id="t74" class="ft due" style="letter-spacing:0.67px;margin-right:-0.67px;left:0.2px">11:30 AM</span><span class="ck dck">✓</span></div>
<div class="c c-tech one"><div><span id="t84" class="ft" style="letter-spacing:0.22px;margin-right:-0.22px;left:0.0px">Jordan Rivera</span></div></div>
<div class="c c-fac one"><span id="t75" class="ft dash" style="letter-spacing:0.00px;margin-right:0.00px;left:2.2px">—</span></div>
<div class="c c-addr one"><span class="ft" style="letter-spacing:0.615px;left:1px">3500 Agualinda Blvd, Cape Coral</span></div>
</div>
<div class="tr" style="top:906px;height:149px">
<div class="c c-cb"><span class="cb"></span></div>
<div class="c c-id"><span id="t88" class="ft" style="letter-spacing:0.00px;margin-right:-0.00px;left:0.9px">#005</span></div>
<div class="c c-pat"><div><span id="t89" class="ft" style="letter-spacing:0.14px;margin-right:-0.14px;left:0.0px">Sofia</span><br><span id="t90" class="ft" style="letter-spacing:1.02px;margin-right:-1.02px;left:0.0px">Martinez</span></div></div>
<div class="c c-set"><span class="set"><span class="sb sb1"><svg class="hs" width="19" height="21" viewBox="0 0 19 21"><rect x="2.2" y="0.5" width="3.1" height="5.5" fill="#9a4a2b"/><path d="M1.6 8.4 L9 2.6 L17 8.6 V19.6 H1.6 Z" fill="#f3dcae"/><path d="M0.5 8.6 L9 1.9 L18 8.8" fill="none" stroke="#e0402f" stroke-width="1.7" stroke-linejoin="miter"/><rect x="1.3" y="8.2" width="1.2" height="11.4" fill="#d9dde6"/><rect x="15.4" y="8.6" width="1.2" height="11" fill="#d9dde6"/><rect x="3.3" y="10.6" width="4.8" height="8.6" fill="#8c3a1f"/><rect x="4.4" y="11.6" width="2.6" height="2.8" fill="#8fb6ee"/><rect x="9.5" y="10.8" width="5" height="4" fill="#9aa7c4"/><rect x="10.6" y="11.6" width="2.8" height="2.2" fill="#3b82f6"/><rect x="1" y="19.2" width="16.4" height="1.2" fill="#c5c9d3"/><rect x="0" y="17.6" width="1.5" height="1.8" fill="#22b14c"/><rect x="16.4" y="17.6" width="1.5" height="1.8" fill="#22b14c"/></svg></span><span class="sb sb2"><span id="t85" class="ft" style="letter-spacing:0.54px;margin-right:-0.54px;left:-0.9px">Home</span></span></span></div>
<div class="c c-exam"><div><span id="t91" class="ft" style="letter-spacing:1.08px;margin-right:-1.08px;left:0.0px">Ultrasound</span><br><span id="t92" class="ft">–</span><br><span id="t93" class="ft" style="letter-spacing:0.71px;margin-right:-0.71px;left:0.0px">Abdominal</span></div></div>
<div class="c c-recv one"><span id="t94" class="ft" style="letter-spacing:1.16px;margin-right:-1.16px;left:1.1px">5:00 PM</span></div>
<div class="c c-prio"><span class="bdg gry" style="width:125px"><span id="t95" class="ft" style="letter-spacing:0.70px;margin-right:-0.70px;left:-0.1px">ROUTINE</span></span></div>
<div class="c c-rdy"><span class="ck">✓</span></div>
<div class="c c-stat"><span class="bdg gry" style="width:140.4px"><span id="t96" class="ft" style="letter-spacing:0.44px;margin-right:-0.44px;left:0.6px">ASSIGNED</span></span></div>
<div class="c c-due"><span id="t86" class="ft due" style="letter-spacing:0.60px;margin-right:-0.60px;left:0.2px">12:00 PM</span><span class="ck dck">✓</span></div>
<div class="c c-tech one"><div><span id="t97" class="ft" style="letter-spacing:0.28px;margin-right:-0.28px;left:0.0px">Priya Patel</span></div></div>
<div class="c c-fac one"><span id="t87" class="ft dash" style="letter-spacing:0.00px;margin-right:0.00px;left:2.2px">—</span></div>
<div class="c c-addr one"><span class="ft" style="letter-spacing:0.487px;left:1px">3702 Estey Ave, Naples</span></div>
</div>
<div class="tr" style="top:1055px;height:113px">
<div class="c c-cb"><span class="cb"></span></div>
<div class="c c-id"><span id="t101" class="ft" style="letter-spacing:0.00px;margin-right:-0.00px;left:0.9px">#002</span></div>
<div class="c c-pat"><div><span id="t102" class="ft" style="letter-spacing:0.18px;margin-right:-0.18px;left:0.0px">James</span><br><span id="t103" class="ft" style="letter-spacing:0.58px;margin-right:-0.58px;left:0.0px">Okonkwo</span></div></div>
<div class="c c-set"><span class="set"><span class="sb sb1"><svg class="hs" width="19" height="21" viewBox="0 0 19 21"><rect x="2.2" y="0.5" width="3.1" height="5.5" fill="#9a4a2b"/><path d="M1.6 8.4 L9 2.6 L17 8.6 V19.6 H1.6 Z" fill="#f3dcae"/><path d="M0.5 8.6 L9 1.9 L18 8.8" fill="none" stroke="#e0402f" stroke-width="1.7" stroke-linejoin="miter"/><rect x="1.3" y="8.2" width="1.2" height="11.4" fill="#d9dde6"/><rect x="15.4" y="8.6" width="1.2" height="11" fill="#d9dde6"/><rect x="3.3" y="10.6" width="4.8" height="8.6" fill="#8c3a1f"/><rect x="4.4" y="11.6" width="2.6" height="2.8" fill="#8fb6ee"/><rect x="9.5" y="10.8" width="5" height="4" fill="#9aa7c4"/><rect x="10.6" y="11.6" width="2.8" height="2.2" fill="#3b82f6"/><rect x="1" y="19.2" width="16.4" height="1.2" fill="#c5c9d3"/><rect x="0" y="17.6" width="1.5" height="1.8" fill="#22b14c"/><rect x="16.4" y="17.6" width="1.5" height="1.8" fill="#22b14c"/></svg></span><span class="sb sb2"><span id="t98" class="ft" style="letter-spacing:0.54px;margin-right:-0.54px;left:-0.9px">Home</span></span></span></div>
<div class="c c-exam"><div><span id="t104" class="ft" style="letter-spacing:-0.15px;margin-right:0.15px;left:0.0px">X-Ray –</span><br><span id="t105" class="ft" style="letter-spacing:0.60px;margin-right:-0.60px;left:0.0px">Skull</span></div></div>
<div class="c c-recv one"><span id="t106" class="ft" style="letter-spacing:1.30px;margin-right:-1.30px;left:0.2px">7:00 PM</span></div>
<div class="c c-prio"><span class="bdg gry" style="width:125px"><span id="t107" class="ft" style="letter-spacing:0.70px;margin-right:-0.70px;left:-0.1px">ROUTINE</span></span></div>
<div class="c c-rdy"><span class="ck">✓</span></div>
<div class="c c-stat"><span class="bdg gry" style="width:140.4px"><span id="t108" class="ft" style="letter-spacing:0.44px;margin-right:-0.44px;left:0.6px">ASSIGNED</span></span></div>
<div class="c c-due"><span id="t99" class="ft due" style="letter-spacing:0.57px;margin-right:-0.57px;left:0.2px">1:00 PM</span><span class="ck dck">✓</span></div>
<div class="c c-tech"><div><span id="t109" class="ft" style="letter-spacing:0.77px;margin-right:-0.77px;left:0.0px">Marcus</span><br><span id="t110" class="ft" style="letter-spacing:0.32px;margin-right:-0.32px;left:0.0px">Williams</span></div></div>
<div class="c c-fac one"><span id="t100" class="ft dash" style="letter-spacing:0.00px;margin-right:0.00px;left:2.2px">—</span></div>
<div class="c c-addr one"><span class="ft" style="letter-spacing:0.484px;left:1px">5321 Tice St, Fort Myers</span></div>
</div>
<div class="tr" style="top:1168px;height:149px">
<div class="c c-cb"><span class="cb"></span></div>
<div class="c c-id"><span id="t114" class="ft">#004</span></div>
<div class="c c-pat"><div><span id="t115" class="ft">Dorothy</span><br><span id="t116" class="ft">Haines</span></div></div>
<div class="c c-set"><span class="set"><span class="sb sb1"><svg class="hs" width="19" height="21" viewBox="0 0 19 21"><rect x="2.2" y="0.5" width="3.1" height="5.5" fill="#9a4a2b"/><path d="M1.6 8.4 L9 2.6 L17 8.6 V19.6 H1.6 Z" fill="#f3dcae"/><path d="M0.5 8.6 L9 1.9 L18 8.8" fill="none" stroke="#e0402f" stroke-width="1.7" stroke-linejoin="miter"/><rect x="1.3" y="8.2" width="1.2" height="11.4" fill="#d9dde6"/><rect x="15.4" y="8.6" width="1.2" height="11" fill="#d9dde6"/><rect x="3.3" y="10.6" width="4.8" height="8.6" fill="#8c3a1f"/><rect x="4.4" y="11.6" width="2.6" height="2.8" fill="#8fb6ee"/><rect x="9.5" y="10.8" width="5" height="4" fill="#9aa7c4"/><rect x="10.6" y="11.6" width="2.8" height="2.2" fill="#3b82f6"/><rect x="1" y="19.2" width="16.4" height="1.2" fill="#c5c9d3"/><rect x="0" y="17.6" width="1.5" height="1.8" fill="#22b14c"/><rect x="16.4" y="17.6" width="1.5" height="1.8" fill="#22b14c"/></svg></span><span class="sb sb2"><span id="t111" class="ft">Home</span></span></span></div>
<div class="c c-exam"><div><span id="t117" class="ft" style="letter-spacing:1.08px;margin-right:-1.08px;left:0.0px">Ultrasound</span><br><span id="t118" class="ft">–</span><br><span id="t119" class="ft">Renal</span></div></div>
<div class="c c-recv one"><span id="t120" class="ft">7:30 PM</span></div>
<div class="c c-prio"><span class="bdg gry" style="width:125px"><span id="t121" class="ft">ROUTINE</span></span></div>
<div class="c c-rdy"><span class="ck">✓</span></div>
<div class="c c-stat"><span class="bdg gry" style="width:140.4px"><span id="t122" class="ft">ASSIGNED</span></span></div>
<div class="c c-due"><span id="t112" class="ft due">1:30 PM</span><span class="ck dck">✓</span></div>
<div class="c c-tech one"><div><span id="t123" class="ft">Priya Patel</span></div></div>
<div class="c c-fac one"><span id="t113" class="ft dash">—</span></div>
<div class="c c-addr one"><span class="ft" style="letter-spacing:0.164px;left:1px">1821 Del Prado Blvd, Cape Coral</span></div>
</div>
 </div>
</main>
</body></html>
